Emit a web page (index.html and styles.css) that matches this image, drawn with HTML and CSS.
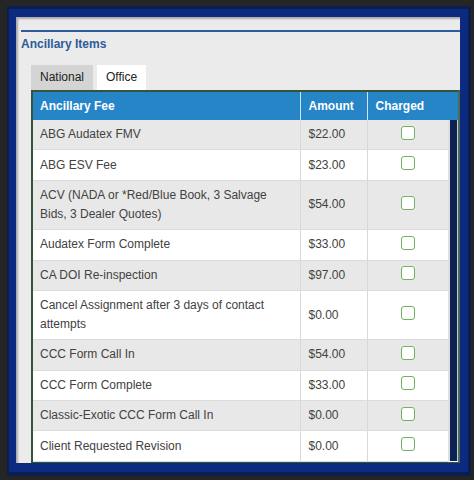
FILE: index.html
```html
<!DOCTYPE html>
<html lang="en">
<head>
<meta charset="utf-8">
<title>Ancillary Items</title>
<link rel="stylesheet" href="styles.css">
</head>
<body>
<div class="frame">
  <div class="panel">
    <div class="rule"></div>
    <h2 class="title">Ancillary Items</h2>
    <div class="tabs">
      <div class="tab">National</div>
      <div class="tab active">Office</div>
    </div>
    <div class="table-wrap">
      <table class="fees">
        <colgroup>
          <col class="c-name"><col class="c-amt"><col class="c-chk"><col class="c-scroll">
        </colgroup>
        <thead>
          <tr>
            <th>Ancillary Fee</th>
            <th class="amt">Amount</th>
            <th class="amt" colspan="2">Charged</th>
          </tr>
        </thead>
        <tbody>
          <tr class="odd"><td>ABG Audatex FMV</td><td class="amt">$22.00</td><td class="chk"><span class="box"></span></td><td class="scroll" rowspan="10"></td></tr>
          <tr><td>ABG ESV Fee</td><td class="amt">$23.00</td><td class="chk"><span class="box"></span></td></tr>
          <tr class="odd"><td>ACV (NADA or *Red/Blue Book, 3 Salvage Bids, 3 Dealer Quotes)</td><td class="amt">$54.00</td><td class="chk"><span class="box"></span></td></tr>
          <tr><td>Audatex Form Complete</td><td class="amt">$33.00</td><td class="chk"><span class="box"></span></td></tr>
          <tr class="odd"><td>CA DOI Re-inspection</td><td class="amt">$97.00</td><td class="chk"><span class="box"></span></td></tr>
          <tr><td>Cancel Assignment after 3 days of contact attempts</td><td class="amt">$0.00</td><td class="chk"><span class="box"></span></td></tr>
          <tr class="odd"><td>CCC Form Call In</td><td class="amt">$54.00</td><td class="chk"><span class="box"></span></td></tr>
          <tr><td>CCC Form Complete</td><td class="amt">$33.00</td><td class="chk"><span class="box"></span></td></tr>
          <tr class="odd"><td>Classic-Exotic CCC Form Call In</td><td class="amt">$0.00</td><td class="chk"><span class="box"></span></td></tr>
          <tr><td>Client Requested Revision</td><td class="amt">$0.00</td><td class="chk"><span class="box"></span></td></tr>
        </tbody>
      </table>
    </div>
  </div>
</div>
</body>
</html>
```

FILE: styles.css
```css
html, body {
  margin: 0;
  padding: 0;
}

body {
  background: #252525;
  font-family: "Liberation Sans", Arial, sans-serif;
  font-size: 12px;
  overflow: hidden;
}

.frame {
  box-sizing: border-box;
  margin: 6px 3px 0 7px;
  height: 470px;
  border-style: solid;
  border-width: 3px 3px 4px 2px;
  border-color: #0c1e4c;
  background: #0b2a80;
  padding: 8px 8px 9px 7px;
}

.panel {
  height: 100%;
  box-sizing: border-box;
  background: #ebebeb;
  overflow: hidden;
  padding-left: 5px;
  box-shadow: inset 2px 2px 2px rgba(0, 0, 0, 0.28);
}

.rule {
  margin-top: 13px;
  height: 2px;
  background: #2c5c9c;
}

.title {
  margin: 4px 0 0;
  font-size: 12px;
  line-height: 16px;
  font-weight: bold;
  color: #2d5b98;
}

.tabs {
  display: flex;
  gap: 4px;
  margin: 13px 0 0 10px;
}

.tab {
  height: 25px;
  line-height: 25px;
  padding: 0 9px;
  color: #222;
  background: #d4d4d4;
}

.tab.active {
  background: #ffffff;
}

.table-wrap {
  margin-left: 10px;
  border: 2px solid #33553a;
  border-right-color: #4d6a55;
  background: #fff;
}

.fees {
  width: 100%;
  border-collapse: collapse;
  table-layout: fixed;
}

.c-name { width: 267px; }
.c-amt { width: 67px; }
.c-chk { width: 81px; }
.c-scroll { width: 10px; }

.fees th {
  height: 28px;
  padding: 0 7px;
  background: #2585c7;
  color: #fff;
  font-weight: bold;
  text-align: left;
  line-height: 16px;
}

.fees th.amt {
  padding-left: 8px;
  border-left: 1px solid #cfe4f5;
}

.fees td {
  padding: 5.2px 8px 5.2px 7px;
  line-height: 19px;
  color: #424242;
  background: #fff;
  border-bottom: 1px solid #dcdcdc;
  vertical-align: middle;
}

.fees tr.odd td {
  background: #e8e8e8;
}

.fees td.amt {
  padding-left: 8px;
  border-left: 1px solid #d8d8d8;
}

.fees td.chk {
  padding: 3px 0 7px;
  border-left: 1px solid #d8d8d8;
}

.box {
  display: block;
  margin: 0 auto;
  width: 14px;
  height: 14px;
  box-sizing: border-box;
  border: 1.5px solid #74b062;
  border-radius: 3px;
  background: #fff;
}

.fees td.scroll,
.fees tr.odd td.scroll {
  padding: 0;
  border: none;
  background: linear-gradient(to right, #dedede 0 2px, #0c2254 2px 9px, #c9cfc9 9px 10px);
}
```
